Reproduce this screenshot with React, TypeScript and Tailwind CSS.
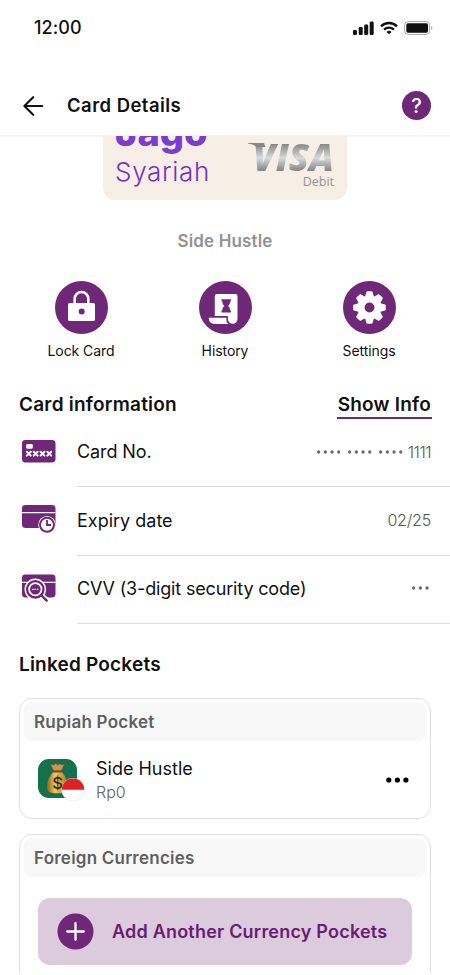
import type { ReactNode } from "react";

const PURPLE = "#6f2877";

function StatusBar() {
    return (
        <div className="flex h-[55px] items-center justify-between pl-[34px] pr-[17px]">
            <span className="text-[18px] font-medium tracking-[0.1px]">12:00</span>
            <div className="flex items-center gap-[6px]">
                <svg width="21" height="14" viewBox="0 0 21 14" fill="#111">
                    <rect x="0" y="9" width="4" height="5" rx="1.3" />
                    <rect x="5.7" y="6" width="4" height="8" rx="1.3" />
                    <rect x="11.2" y="3.5" width="4" height="10.5" rx="1.3" />
                    <rect x="16.7" y="0.5" width="4" height="13.5" rx="1.3" />
                </svg>
                <svg width="18" height="14" viewBox="0 0 18 14" fill="none" stroke="#111">
                    <path d="M1 5.3a11.4 11.4 0 0 1 16 0" strokeWidth="2.4" />
                    <path d="M4 8.6a7.1 7.1 0 0 1 10 0" strokeWidth="2.3" />
                    <path d="M9 13.3 6.5 10.9a3.6 3.6 0 0 1 5 0z" fill="#111" stroke="none" />
                </svg>
                <svg width="29" height="14" viewBox="0 0 29 14">
                    <rect x="0.6" y="0.6" width="25" height="12.8" rx="3.6" fill="none" stroke="#a8a8a8" strokeWidth="1" />
                    <rect x="2.3" y="2.3" width="21.7" height="9.4" rx="1.6" fill="#111" />
                    <path d="M27.2 4.7c1.6.7 1.6 3.9 0 4.6z" fill="#a8a8a8" />
                </svg>
            </div>
        </div>
    );
}

function Header() {
    return (
        <div className="flex h-[80px] items-center pl-[23px] pr-[19px] pt-[21px]">
            <svg width="21" height="20" viewBox="0 0 21 20" fill="none" stroke="#111" strokeWidth="2.1" strokeLinecap="round" strokeLinejoin="round">
                <path d="M19.2 10H1.5M10.2 1.2 1.4 10l8.8 8.8" />
            </svg>
            <h1 className="ml-[23px] text-[18.5px] font-semibold tracking-[0.45px]">Card Details</h1>
            <span className="ml-auto flex size-[29px] items-center justify-center rounded-full bg-[#6f2877] text-[20px] font-medium text-white">
                ?
            </span>
        </div>
    );
}

function BankCard() {
    return (
        <div className="mx-auto flex h-[63.5px] w-[244px] justify-between overflow-hidden rounded-b-[12px] bg-[#f7efe6] pl-[12px] pr-[13px]">
            <div className="text-[#7d3bd0]">
                <div className="-mt-[28px] h-[48px] text-[38px] leading-[48px] font-extrabold">Jago</div>
                <div className="text-[26px] leading-[31px] font-light tracking-[0.7px] text-[#7430c9]">Syariah</div>
            </div>
            <div className="relative flex flex-col items-end pt-[7px]">
                <svg className="absolute left-0 top-[7px]" width="18" height="4" viewBox="0 0 18 4">
                    <path d="M0 0h16l1.500 4H8.500C6.500 1.800 3.500 1 0 .7z" fill="#858889" />
                </svg>
                <div className="h-[30px] bg-gradient-to-b from-[#7f8283] via-[#d8dbdb] to-[#747879] bg-clip-text pl-[5px] font-['Open_Sans'] text-[37px] leading-[27px] font-extrabold italic text-transparent">
                    VISA
                </div>
                <div className="font-['Open_Sans'] text-[12.5px] leading-[18px] text-[#929494]">Debit</div>
            </div>
        </div>
    );
}

function Action({ label, children }: { label: string; children: ReactNode }) {
    return (
        <button type="button" className="flex flex-col items-center">
            <span className="flex size-[53px] items-center justify-center rounded-full bg-[#6f2877]">{children}</span>
            <span className="mt-[7px] text-[14px] leading-[20px] tracking-[-0.08px]">{label}</span>
        </button>
    );
}

function LockIcon() {
    return (
        <svg width="53" height="53" viewBox="0 0 53 53">
            <path d="M19.7 23v-5.2a6.8 6.8 0 0 1 13.600 0V23" fill="none" stroke="#fff" strokeWidth="2.6" />
            <rect x="13" y="22" width="27" height="18" rx="1.6" fill="#fff" />
            <circle cx="26.7" cy="30.6" r="3" fill={PURPLE} />
        </svg>
    );
}

function HistoryIcon() {
    return (
        <svg width="53" height="53" viewBox="0 0 53 53" fill="#fff">
            <path d="M18 13.1h18.500a2 2 0 0 1 2 2V38a4.800 4.800 0 0 1-9.600 0v-2.900H15.800V15.200a2.100 2.100 0 0 1 2.200-2.100z" />
            <path d="M9.800 36.800h17.600v1.700c0 2 .8 3.500 2.100 4.500H16c-4 0-6.200-2.100-6.200-6.200z" />
            <path d="M22.500 18.200h9.400v2.300h-.9c0 2.600-.8 3.600-2 4.400 1.200.8 2 1.800 2 4.300h.9v2.300h-9.400v-2.300h.9c0-2.500.8-3.500 2-4.300-1.200-.8-2-1.800-2-4.400h-.9z" fill={PURPLE} />
        </svg>
    );
}

const GEAR_TEETH = [0, 45, 90, 135, 180, 225, 270, 315];

function GearIcon() {
    return (
        <svg width="53" height="53" viewBox="0 0 53 53" fill="#fff">
            <circle cx="26.5" cy="26.5" r="12" />
            {GEAR_TEETH.map((angle) => (
                <path
                    key={angle}
                    d="M21.900 16.500 23.400 11q.3-.8 1.200-.8h3.800q.9 0 1.200.8l1.500 5.500z"
                    transform={`rotate(${angle} 26.5 26.5)`}
                />
            ))}
            <circle cx="26.5" cy="26.5" r="4.9" fill={PURPLE} />
        </svg>
    );
}

function CardNumberIcon() {
    return (
        <svg width="34" height="30" viewBox="0 0 34 30">
            <rect x="0" y="4" width="33.5" height="22.5" rx="3.4" fill={PURPLE} />
            <rect x="4.2" y="8" width="6.6" height="4.8" rx="1.3" fill="#fff" />
            {[4.9, 11.7, 18.5, 25.3].map((x) => (
                <path key={x} d={`M${x} 15.700l3.900 3.900m0-3.900-3.900 3.900`} stroke="#fff" strokeWidth="2" strokeLinecap="round" />
            ))}
        </svg>
    );
}

function ExpiryIcon() {
    return (
        <svg width="34" height="30" viewBox="0 0 34 30">
            <rect x="0" y="1" width="33.5" height="23" rx="3.4" fill={PURPLE} />
            <path d="M0 8.600h33.500" stroke="#fff" strokeWidth="1.4" />
            <circle cx="25" cy="20.8" r="8.8" fill="#fff" />
            <circle cx="25" cy="20.8" r="7" fill="#fff" stroke={PURPLE} strokeWidth="2" />
            <path d="M25 16v5h4" fill="none" stroke={PURPLE} strokeWidth="1.8" />
        </svg>
    );
}

function CvvIcon() {
    return (
        <svg width="34" height="30" viewBox="0 0 34 30">
            <rect x="0" y="1.5" width="33.5" height="23" rx="3.4" fill={PURPLE} />
            <path d="M0 9.400h33.500" stroke="#fff" strokeWidth="1.4" />
            <path d="m19 22 7.500 7" stroke="#fff" strokeWidth="5.5" />
            <circle cx="13.3" cy="16.3" r="10.8" fill="#fff" />
            <circle cx="13.3" cy="16.3" r="8.2" fill="#fff" stroke={PURPLE} strokeWidth="2.3" />
            <circle cx="13.3" cy="16.3" r="5.3" fill={PURPLE} />
            <path d="M10.300 16.300h6" stroke="#fff" strokeWidth="1.3" strokeDasharray="1.4 .9" />
            <path d="m19.500 22.500 5.200 5.200" stroke={PURPLE} strokeWidth="2.4" strokeLinecap="round" />
        </svg>
    );
}

function MaskDots({ count }: { count: number }) {
    return (
        <svg width={count * 6.7 - 3.4} height="4" fill="#6a6a6a">
            {Array.from({ length: count }, (_, i) => (
                <circle key={i} cx={1.65 + i * 6.7} cy="2" r="1.65" />
            ))}
        </svg>
    );
}

function InfoRow({ icon, label, children }: { icon: ReactNode; label: ReactNode; children: ReactNode }) {
    return (
        <div className="flex h-[68.4px] pl-[22px]">
            <div className="mt-[17px] w-[55px]">{icon}</div>
            <div className="flex flex-1 items-center justify-between border-b-[1.5px] border-[#dedede] pr-[19px] pb-[2px]">
                {label}
                <div className="flex items-center text-[16px] font-light text-[#555]">{children}</div>
            </div>
        </div>
    );
}

function MoneyBag() {
    return (
        <svg width="48" height="45" viewBox="0 0 48 45">
            <defs>
                <linearGradient id="bag" x1="0" x2="1">
                    <stop offset="0" stopColor="#8f6318" />
                    <stop offset=".4" stopColor="#f3cc58" />
                    <stop offset="1" stopColor="#a4701d" />
                </linearGradient>
            </defs>
            <rect x="0" y="2" width="39" height="39" rx="11" fill="#14704f" />
            <path d="M15.700 14.500C10.500 20 8.700 26 9.100 31c.3 4 3.200 5.300 10.400 5.300S29.600 35 29.900 31c.4-5-1.400-11-6.600-16.500z" fill="url(#bag)" />
            <path d="m12.500 7.200 3.200.9 2.200-1.500 2 1.300 2.300-1.200 1.800 1.300 2.500-.7-3.300 6.600h-7.500z" fill="#c99756" stroke="#84531f" strokeWidth=".6" />
            <rect x="14.6" y="13.4" width="9.9" height="2.2" rx="1.1" fill="#7b4a1d" />
            <text x="19.5" y="32" textAnchor="middle" fontFamily="Inter, sans-serif" fontSize="16.5" fontWeight="500" fill="#2b2620">$</text>
            <circle cx="35" cy="32.7" r="11.3" fill="#fff" stroke="#e6e6e6" strokeWidth=".6" />
            <path d="M23.700 32.700a11.300 11.300 0 0 1 22.600 0z" fill="#e02226" />
        </svg>
    );
}

function PocketBox({ title, children }: { title: ReactNode; children: ReactNode }) {
    return (
        <div className="mx-[19px] rounded-[13px] border-[1.5px] border-[#e0e0e0] px-[4px] pt-[4px]">
            <div className="flex h-[38px] items-center rounded-[7px] bg-[#f8f8f8] pt-[2px] pl-[10px] text-[17px] font-semibold tracking-[0.23px] text-[#5f5f5f]">
                {title}
            </div>
            {children}
        </div>
    );
}

export default function App() {
    return (
        <div className="h-[974px] w-[450px] overflow-hidden bg-white font-[Inter,sans-serif] text-[#111]">
            <StatusBar />
            <Header />
            <div className="h-[2px] bg-gradient-to-b from-[#f0f0f0] to-[#fafafa]" />
            <div className="-mt-px h-[64px]">
                <BankCard />
            </div>
            <p className="mt-[29px] text-center text-[17px] leading-[24px] font-semibold tracking-[0.15px] text-[#929292]">Side Hustle</p>

            <div className="mt-[28px] grid grid-cols-3 px-[9px]">
                <Action label="Lock Card"><LockIcon /></Action>
                <Action label="History"><HistoryIcon /></Action>
                <Action label="Settings"><GearIcon /></Action>
            </div>

            <div className="mt-[30px] flex h-[28px] items-start justify-between pl-[19px] pr-[18px]">
                <h2 className="text-[19px] leading-[28px] font-semibold tracking-[0.22px]">Card information</h2>
                <button type="button" className="h-[28px] border-b-2 border-[#6f2877] px-px text-[19px] leading-[28px] font-semibold tracking-[0.22px]">
                    Show Info
                </button>
            </div>

            <InfoRow icon={<CardNumberIcon />} label={<span className="text-[18px] tracking-[-0.1px]">Card No.</span>}>
                <div className="flex gap-[7.8px]">
                    <MaskDots count={4} />
                    <MaskDots count={4} />
                    <MaskDots count={4} />
                </div>
                <span className="ml-[5px] tracking-[-0.5px]">1111</span>
            </InfoRow>
            <InfoRow icon={<ExpiryIcon />} label={<span className="text-[18px]">Expiry date</span>}>
                <span className="tracking-[-0.2px]">02/25</span>
            </InfoRow>
            <InfoRow icon={<CvvIcon />} label={<span className="text-[18px] tracking-[-0.16px]">CVV (3-digit security code)</span>}>
                <div className="pr-[2px]">
                    <MaskDots count={3} />
                </div>
            </InfoRow>

            <h2 className="mt-[27px] mb-[19px] pl-[19px] text-[19px] leading-[28px] font-semibold tracking-[0.2px]">Linked Pockets</h2>

            <PocketBox title="Rupiah Pocket">
                <div className="flex h-[77px] items-center pl-[14px] pr-[17px]">
                    <MoneyBag />
                    <div className="ml-[10px] pt-[2px]">
                        <div className="text-[18px] leading-[24px]">Side Hustle</div>
                        <div className="text-[16px] leading-[23px] font-light text-[#626262]">Rp0</div>
                    </div>
                    <svg className="ml-auto" width="23" height="6" viewBox="0 0 23 6" fill="#000">
                        <circle cx="2.8" cy="3" r="2.6" />
                        <circle cx="11.4" cy="3" r="2.6" />
                        <circle cx="19.9" cy="3" r="2.6" />
                    </svg>
                </div>
            </PocketBox>

            <div className="h-[15px]" />
            <PocketBox title="Foreign Currencies">
                <div className="px-[14px] pt-[21px] pb-[20px]">
                    <button type="button" className="flex h-[67px] w-full items-center rounded-[12px] bg-[#dccadd] pl-[19px] text-[18px] font-semibold tracking-[0.21px] text-[#6a1b74]">
                        <svg width="37" height="37" viewBox="0 0 37 37" fill="none" stroke="#fff" strokeWidth="2.3" strokeLinecap="round">
                            <circle cx="18.5" cy="18.5" r="18" fill={PURPLE} stroke="none" />
                            <path d="M18.500 10.200v16.600M10.200 18.500h16.600" />
                        </svg>
                        <span className="ml-[18px]">Add Another Currency Pockets</span>
                    </button>
                </div>
            </PocketBox>
        </div>
    );
}
